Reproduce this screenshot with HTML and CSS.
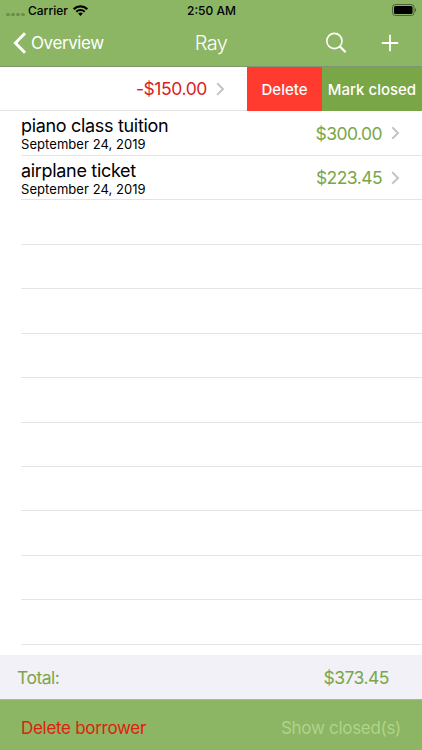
FILE: index.html
```html
<!DOCTYPE html>
<html lang="en">
<head>
    <meta charset="UTF-8">
    <meta name="viewport" content="width=device-width, initial-scale=1.0">
    <title>Ray</title>
    <link rel="stylesheet" href="styles.css">
</head>
<body>
<div class="app">
    <header class="header">
        <div class="status">
            <div class="carrier">
                <div class="dots"><i></i><i></i><i></i><i></i></div>
                <span class="carrier-name">Carrier</span>
                <svg class="wifi" width="15" height="11" viewBox="0 0 15 11">
                    <path d="M.8 4.2a9.5 9.5 0 0 1 13.4 0" fill="none" stroke="#000" stroke-width="2.3"/>
                    <path d="M3.3 6.8a6 6 0 0 1 8.4 0" fill="none" stroke="#000" stroke-width="2"/>
                    <path d="M7.5 11L5.2 8.6a3.3 3.3 0 0 1 4.6 0z"/>
                </svg>
            </div>
            <span class="time">2:50 AM</span>
            <svg class="battery" width="25" height="12" viewBox="0 0 25 12">
                <rect x=".5" y=".5" width="21.5" height="11" rx="3" fill="none" stroke="#000" stroke-opacity=".45"/>
                <rect x="2" y="2" width="18.5" height="8" rx="1.6"/>
                <path d="M23 4v4c1.6-.7 1.6-3.3 0-4z" fill-opacity=".45"/>
            </svg>
        </div>
        <div class="nav">
            <div class="back">
                <svg width="14" height="22" viewBox="0 0 14 22">
                    <path d="M12 1.3L2.4 11l9.6 9.7" fill="none" stroke="#fff" stroke-width="3"/>
                </svg>
                <span class="back-label">Overview</span>
            </div>
            <h1 class="title">Ray</h1>
            <div class="tools">
                <svg width="22" height="22" viewBox="0 0 22 22" fill="none" stroke="#fff">
                    <circle cx="9.4" cy="9" r="7.6" stroke-width="1.6"/>
                    <path d="M14.8 14.4l5.8 5.8" stroke-width="2.2"/>
                </svg>
                <svg width="18" height="18" viewBox="0 0 18 18" fill="none" stroke="#fff" stroke-width="1.8">
                    <path d="M9 .8v16.4M.8 9h16.4"/>
                </svg>
            </div>
        </div>
    </header>

    <main class="list">
        <div class="row swiped">
            <span class="amount negative">-$150.00</span>
            <svg class="chevron" width="9" height="14" viewBox="0 0 9 14"><path d="M1.2 1.2L7 7l-5.8 5.8"/></svg>
            <div class="action delete"><span>Delete</span></div>
            <div class="action mark"><span>Mark closed</span></div>
        </div>
        <div class="row">
            <div class="info">
                <p class="name">piano class tuition</p>
                <p class="date">September 24, 2019</p>
            </div>
            <span class="amount">$300.00</span>
            <svg class="chevron" width="9" height="14" viewBox="0 0 9 14"><path d="M1.2 1.2L7 7l-5.8 5.8"/></svg>
        </div>
        <div class="row">
            <div class="info">
                <p class="name">airplane ticket</p>
                <p class="date">September 24, 2019</p>
            </div>
            <span class="amount">$223.45</span>
            <svg class="chevron" width="9" height="14" viewBox="0 0 9 14"><path d="M1.2 1.2L7 7l-5.8 5.8"/></svg>
        </div>
        <div class="row"></div>
        <div class="row"></div>
        <div class="row"></div>
        <div class="row"></div>
        <div class="row"></div>
        <div class="row"></div>
        <div class="row"></div>
        <div class="row"></div>
        <div class="row"></div>
        <div class="row"></div>
    </main>

    <div class="total">
        <span class="total-label">Total:</span>
        <span class="total-amount">$373.45</span>
    </div>

    <footer class="toolbar">
        <span class="delete-borrower">Delete borrower</span>
        <span class="show-closed">Show closed(s)</span>
    </footer>
</div>
</body>
</html>
```
FILE: styles.css
```css
* {
    margin: 0;
    padding: 0;
    box-sizing: border-box;
}
body {
    font-family: Inter, 'Liberation Sans', sans-serif;
    background: #fff;
    color: #000;
}
.app {
    width: 422px;
    height: 750px;
    display: flex;
    flex-direction: column;
    overflow: hidden;
    white-space: nowrap;
}
svg {
    display: block;
    flex: none;
}

/* header */
.header {
    height: 67px;
    flex: none;
    background: #8cb564;
    border-bottom: 1px solid #809571;
}
.status {
    height: 20px;
    padding: 0 5px 0 6px;
    display: grid;
    grid-template-columns: 1fr auto 1fr;
    align-items: center;
    font-size: 12px;
    font-weight: 500;
}
.carrier {
    display: flex;
    align-items: center;
}
.dots {
    display: flex;
    gap: 1px;
    width: 22px;
    padding-top: 8px;
}
.dots i {
    width: 4px;
    height: 3px;
    border-radius: 2px;
    background: #6d8d4e;
}
.wifi {
    margin-left: 5px;
}
.battery {
    justify-self: end;
}
.nav {
    height: 46px;
    padding: 0 23px 0 13px;
    display: grid;
    grid-template-columns: 1fr auto 1fr;
    align-items: center;
    color: #fff;
}
.back {
    display: flex;
    align-items: center;
    gap: 4px;
    font-size: 17px;
    letter-spacing: -0.4px;
}
.title {
    font-size: 20px;
    font-weight: 300;
    letter-spacing: -0.6px;
    margin-left: 10px;
}
.tools {
    display: flex;
    align-items: center;
    justify-content: flex-end;
    gap: 34px;
}

/* list */
.list {
    height: 588px;
    flex: none;
}
.row {
    height: 44.45px;
    margin-left: 21px;
    padding-right: 22px;
    display: flex;
    align-items: center;
    border-bottom: 1px solid #e4e4e6;
}
.swiped {
    margin-left: 0;
    padding-right: 0;
    justify-content: flex-end;
}
.info {
    flex: 1;
    padding-top: 3px;
}
.name {
    font-size: 18px;
    line-height: 20px;
    letter-spacing: -0.32px;
}
.date {
    font-size: 13px;
    line-height: 17px;
    letter-spacing: 0.06px;
}
.amount {
    font-size: 17.5px;
    letter-spacing: -0.55px;
    color: #79a64a;
}
.negative {
    letter-spacing: -0.4px;
    color: #d9231c;
}
.chevron {
    margin-left: 9px;
    fill: none;
    stroke: #c4c4c8;
    stroke-width: 2;
}
.action {
    height: 44px;
    display: flex;
    align-items: center;
    justify-content: center;
    align-self: flex-start;
    color: #fff;
    font-size: 15px;
    font-weight: 500;
}
.delete {
    width: 75px;
    margin-left: 22px;
    background: #ff3b30;
}
.mark {
    width: 100px;
    background: #79a646;
}

/* bottom */
.total {
    height: 44px;
    flex: none;
    padding: 1px 33px 0 17px;
    display: flex;
    align-items: center;
    justify-content: space-between;
    background: #f1f1f7;
    color: #79a64a;
    font-size: 17.5px;
    letter-spacing: -0.5px;
}
.toolbar {
    flex: 1;
    padding: 5px 21px 0;
    display: flex;
    align-items: center;
    justify-content: space-between;
    background: #8cb564;
    border-top: 1px solid #a9b998;
    font-size: 17px;
    letter-spacing: -0.3px;
}
.delete-borrower {
    color: #e0200c;
}
.show-closed {
    color: #b0d48a;
}
```
